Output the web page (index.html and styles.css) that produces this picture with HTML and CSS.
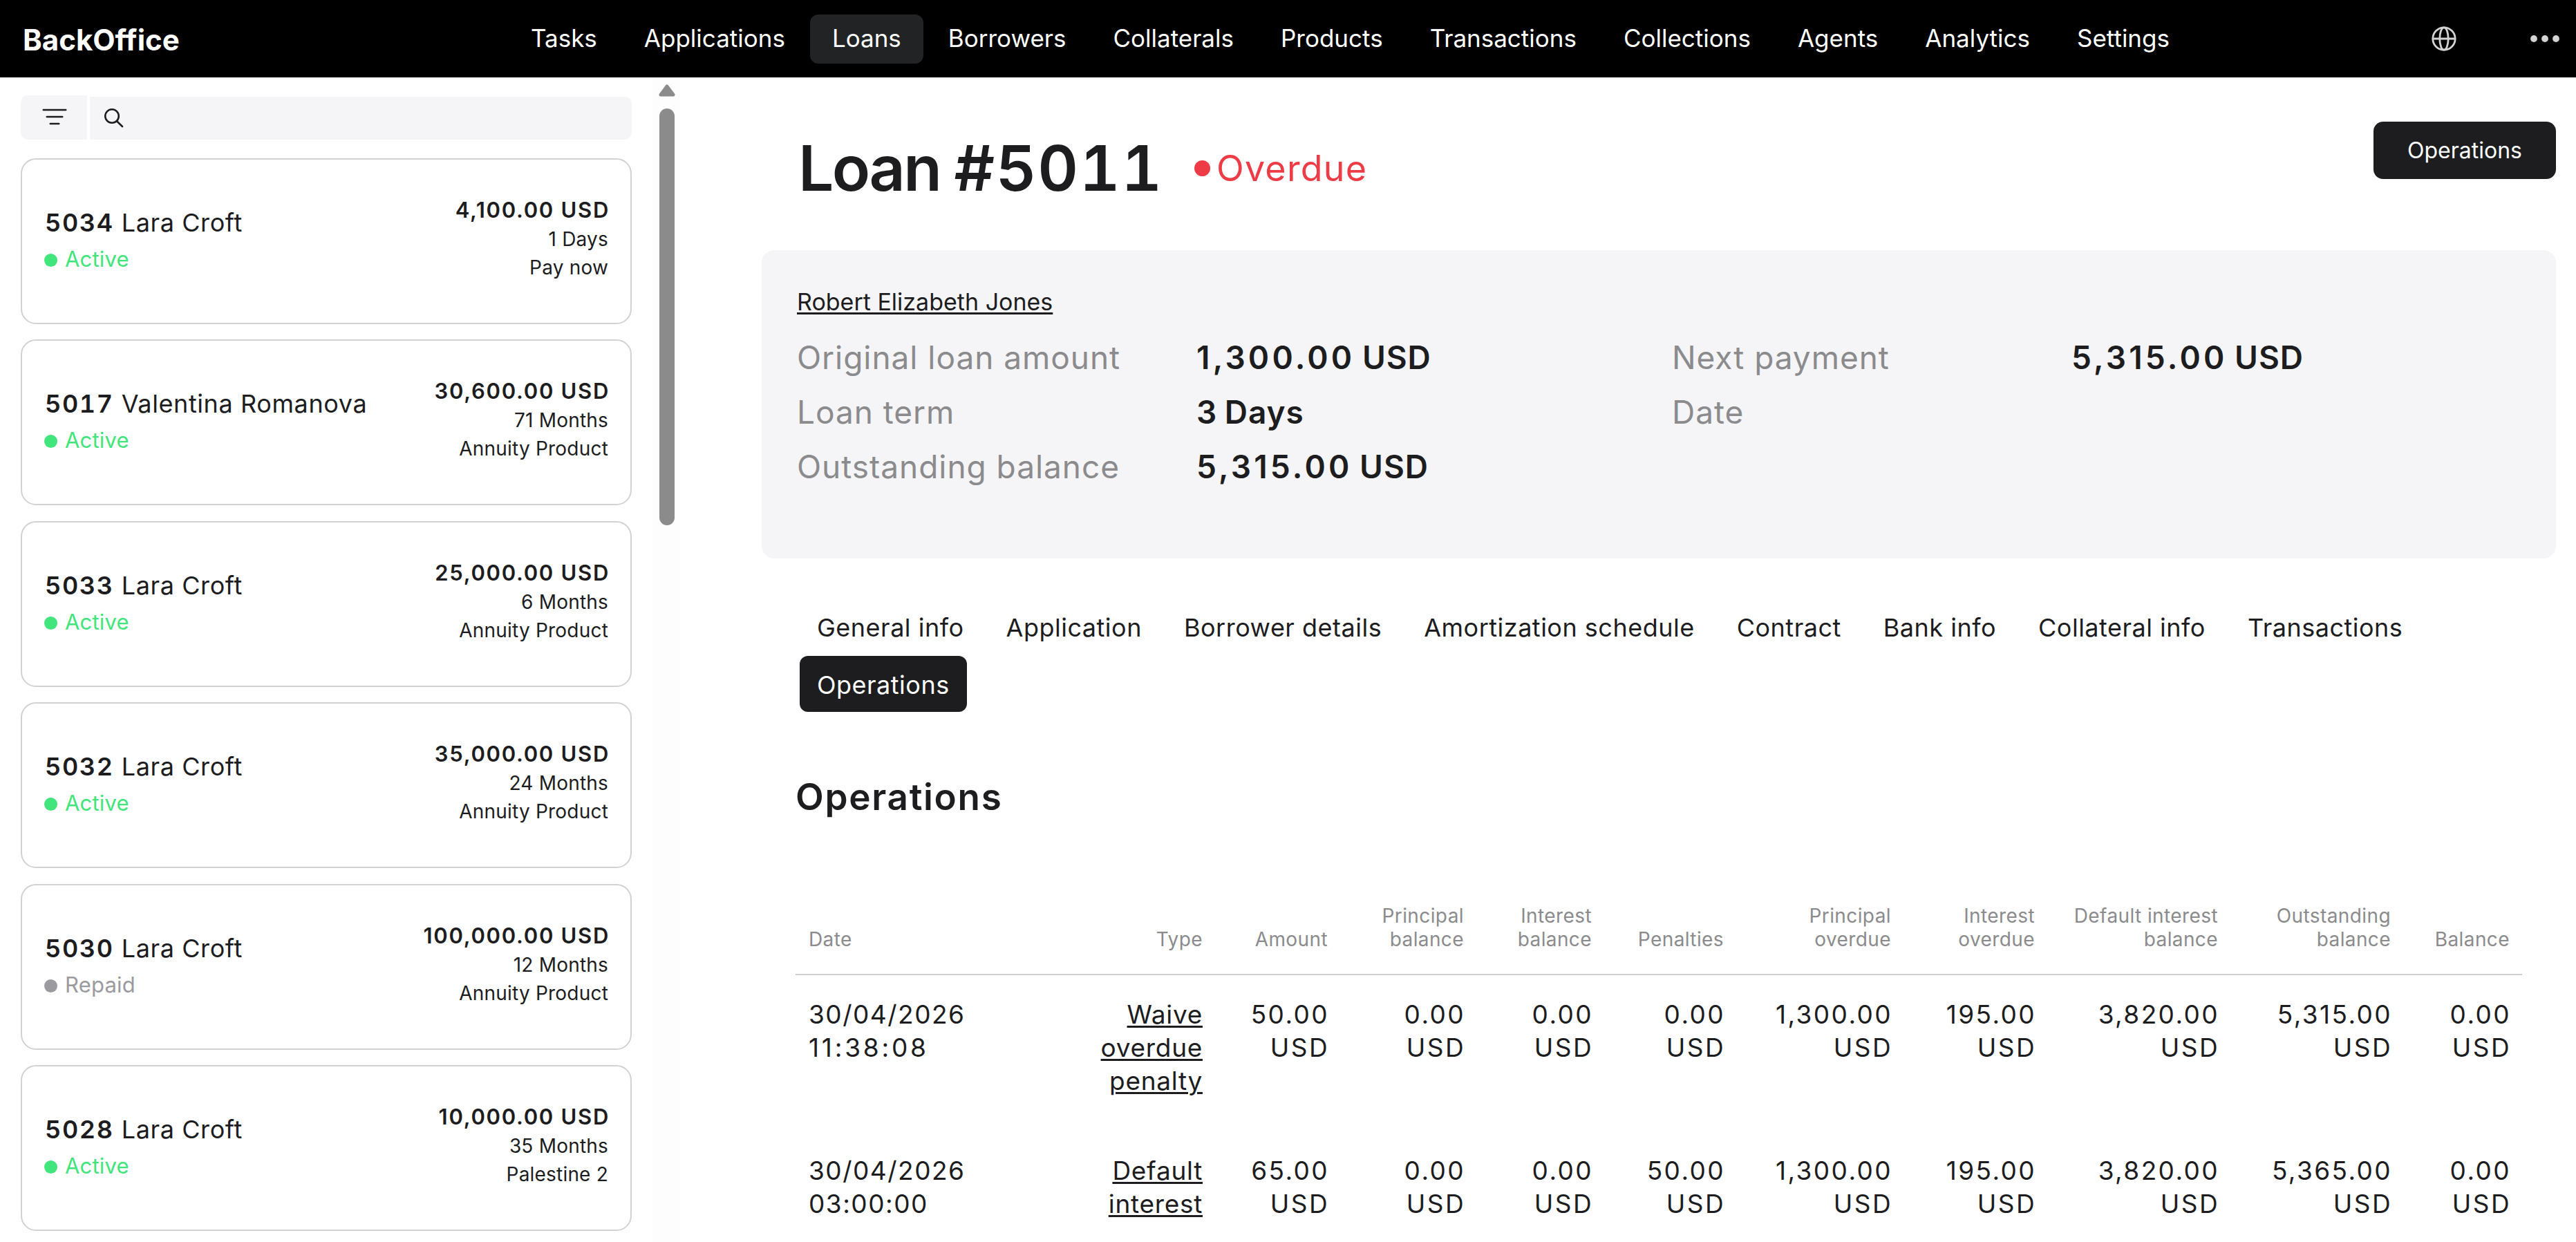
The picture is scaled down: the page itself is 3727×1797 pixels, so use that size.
FILE: index.html
```html
<!DOCTYPE html>
<html lang="en">
<head>
	<title>BackOffice</title>

	<meta charset="UTF-8">

	<link rel="stylesheet" href="styles.css">
</head>

<body>

<header class="header">
	<div class="brand">BackOffice</div>

	<nav class="menu">
		<a class="menu-item">Tasks</a>
		<a class="menu-item">Applications</a>
		<a class="menu-item active">Loans</a>
		<a class="menu-item">Borrowers</a>
		<a class="menu-item">Collaterals</a>
		<a class="menu-item">Products</a>
		<a class="menu-item">Transactions</a>
		<a class="menu-item">Collections</a>
		<a class="menu-item">Agents</a>
		<a class="menu-item">Analytics</a>
		<a class="menu-item">Settings</a>
	</nav>

	<div class="header-icons">
		<svg class="globe" width="36" height="36" viewBox="0 0 36 36">
			<circle cx="18" cy="18" r="16.2"/>
			<ellipse cx="18" cy="18" rx="6.2" ry="16.2"/>
			<path d="M1.8 18H34.2"/>
		</svg>
		<svg class="more" width="42" height="10" viewBox="0 0 42 10">
			<circle cx="5" cy="5" r="4.9"/>
			<circle cx="21" cy="5" r="4.9"/>
			<circle cx="37" cy="5" r="4.9"/>
		</svg>
	</div>
</header>

<div class="page">

	<aside class="sidebar">
		<div class="search">
			<div class="filter-button">
				<svg width="36" height="24" viewBox="0 0 36 24">
					<path d="M1.8 2H34.2M6.8 12H29.2M11.8 22H24.2"/>
				</svg>
			</div>
			<div class="search-field">
				<svg width="28" height="28" viewBox="0 0 28 28">
					<circle cx="11" cy="11" r="9.8"/>
					<path d="M18 18.2L26 26"/>
				</svg>
			</div>
		</div>

		<div class="cards">
			<div class="card">
				<div class="card-left">
					<div class="card-name"><b>5034</b> Lara Croft</div>
					<div class="status green"><i></i>Active</div>
				</div>
				<div class="card-right">
					<div class="card-sum">4,100.00 USD</div>
					<div>1 Days</div>
					<div>Pay now</div>
				</div>
			</div>
			<div class="card">
				<div class="card-left">
					<div class="card-name"><b>5017</b> Valentina Romanova</div>
					<div class="status green"><i></i>Active</div>
				</div>
				<div class="card-right">
					<div class="card-sum">30,600.00 USD</div>
					<div>71 Months</div>
					<div>Annuity Product</div>
				</div>
			</div>
			<div class="card">
				<div class="card-left">
					<div class="card-name"><b>5033</b> Lara Croft</div>
					<div class="status green"><i></i>Active</div>
				</div>
				<div class="card-right">
					<div class="card-sum">25,000.00 USD</div>
					<div>6 Months</div>
					<div>Annuity Product</div>
				</div>
			</div>
			<div class="card">
				<div class="card-left">
					<div class="card-name"><b>5032</b> Lara Croft</div>
					<div class="status green"><i></i>Active</div>
				</div>
				<div class="card-right">
					<div class="card-sum">35,000.00 USD</div>
					<div>24 Months</div>
					<div>Annuity Product</div>
				</div>
			</div>
			<div class="card">
				<div class="card-left">
					<div class="card-name"><b>5030</b> Lara Croft</div>
					<div class="status gray"><i></i>Repaid</div>
				</div>
				<div class="card-right">
					<div class="card-sum">100,000.00 USD</div>
					<div>12 Months</div>
					<div>Annuity Product</div>
				</div>
			</div>
			<div class="card">
				<div class="card-left">
					<div class="card-name"><b>5028</b> Lara Croft</div>
					<div class="status green"><i></i>Active</div>
				</div>
				<div class="card-right">
					<div class="card-sum">10,000.00 USD</div>
					<div>35 Months</div>
					<div>Palestine 2</div>
				</div>
			</div>
		</div>
	</aside>

	<div class="scrollbar">
		<svg width="24" height="18" viewBox="0 0 24 18">
			<path d="M12 3L21 15H3Z"/>
		</svg>
		<div class="thumb"></div>
	</div>

	<main class="content">
		<div class="title-row">
			<h1>Loan <span>#5011</span></h1>
			<div class="loan-status"><i></i>Overdue</div>
			<button class="button">Operations</button>
		</div>

		<section class="summary">
			<a class="client">Robert Elizabeth Jones</a>
			<div class="summary-grid">
				<span>Original loan amount</span>
				<b><em>1,300.00</em> USD</b>
				<span>Next payment</span>
				<b><em>5,315.00</em> USD</b>
				<span>Loan term</span>
				<b>3 Days</b>
				<span>Date</span>
				<b></b>
				<span>Outstanding balance</span>
				<b><em>5,315.00</em> USD</b>
			</div>
		</section>

		<div class="tabs">
			<a class="tab">General info</a>
			<a class="tab">Application</a>
			<a class="tab">Borrower details</a>
			<a class="tab">Amortization schedule</a>
			<a class="tab">Contract</a>
			<a class="tab">Bank info</a>
			<a class="tab">Collateral info</a>
			<a class="tab">Transactions</a>
			<a class="tab active">Operations</a>
		</div>

		<h2>Operations</h2>

		<table class="operations">
			<colgroup>
				<col class="c-date"><col class="c-type"><col class="c-amount">
				<col class="c-principal"><col class="c-interest"><col class="c-penalties">
				<col class="c-principal-over"><col class="c-interest-over"><col class="c-default">
				<col class="c-outstanding"><col class="c-balance">
			</colgroup>
			<thead>
				<tr>
					<th>Date</th>
					<th>Type</th>
					<th>Amount</th>
					<th>Principal<br>balance</th>
					<th>Interest<br>balance</th>
					<th>Penalties</th>
					<th>Principal<br>overdue</th>
					<th>Interest<br>overdue</th>
					<th>Default interest<br>balance</th>
					<th>Outstanding<br>balance</th>
					<th>Balance</th>
				</tr>
			</thead>
			<tbody>
				<tr>
					<td>30/04/2026<br><span class="time">11:38:08</span></td>
					<td><a>Waive<br>overdue<br>penalty</a></td>
					<td>50.00<br>USD</td>
					<td>0.00<br>USD</td>
					<td>0.00<br>USD</td>
					<td>0.00<br>USD</td>
					<td>1,300.00<br>USD</td>
					<td>195.00<br>USD</td>
					<td>3,820.00<br>USD</td>
					<td>5,315.00<br>USD</td>
					<td>0.00<br>USD</td>
				</tr>
				<tr>
					<td>30/04/2026<br><span class="time round">03:00:00</span></td>
					<td><a>Default<br>interest</a></td>
					<td>65.00<br>USD</td>
					<td>0.00<br>USD</td>
					<td>0.00<br>USD</td>
					<td>50.00<br>USD</td>
					<td>1,300.00<br>USD</td>
					<td>195.00<br>USD</td>
					<td>3,820.00<br>USD</td>
					<td>5,365.00<br>USD</td>
					<td>0.00<br>USD</td>
				</tr>
			</tbody>
		</table>
	</main>

</div>

</body>
</html>
```
FILE: styles.css
```css
* {
	box-sizing: border-box;
}

body {
	margin: 0;
	height: 1797px;
	overflow: hidden;
	background: #fff;
	color: #1d1d1f;
	font-family: Inter, "Liberation Sans", sans-serif;
	font-size: 28px;
}

/* header */

.header {
	display: flex;
	align-items: center;
	height: 112px;
	background: #000;
	color: #fff;
}

.brand {
	width: 736px;
	padding: 2px 0 0 33px;
	font-size: 42px;
	font-weight: 700;
}

.menu {
	display: flex;
	justify-content: space-between;
	width: 2435px;
}

.menu-item {
	height: 71px;
	padding: 0 32px;
	border-radius: 12px;
	font-size: 35px;
	line-height: 69px;
}

.menu-item.active {
	background: #222325;
}

.header-icons {
	display: flex;
	flex: 1;
	align-items: center;
	justify-content: space-between;
	padding: 0 24px 0 347px;
}

.globe {
	fill: none;
	stroke: #d2d2d2;
	stroke-width: 2.8;
}

.more {
	fill: #d2d2d2;
}

.page {
	display: flex;
	height: 1685px;
}

/* list of loans */

.sidebar {
	width: 944px;
	padding: 26px 30px 0 30px;
	overflow: hidden;
}

.search {
	display: flex;
	gap: 4px;
	align-items: flex-end;
	width: 884px;
	height: 64px;
}

.filter-button {
	display: flex;
	align-items: center;
	justify-content: center;
	width: 96px;
	height: 64px;
	padding: 0 0 3px 1px;
	border-radius: 10px 0 0 10px;
	background: #f5f5f7;
}

.search-field {
	display: flex;
	align-items: center;
	flex: 1;
	height: 62px;
	padding: 0 0 1px 21px;
	border-radius: 0 10px 10px 0;
	background: #f5f5f7;
}

.search svg {
	fill: none;
	stroke: #1d1d1f;
	stroke-width: 2.6;
	stroke-linecap: round;
}

.cards {
	display: flex;
	flex-direction: column;
	gap: 22.4px;
	width: 884px;
	margin-top: 27px;
}

.card {
	display: flex;
	justify-content: space-between;
	flex: none;
	height: 240px;
	padding: 0 32px 0 33px;
	border: 2px solid #d2d2d2;
	border-radius: 22px;
}

.card-left {
	padding-top: 69px;
}

.card-name {
	font-size: 36px;
	line-height: 44px;
	letter-spacing: 0.6px;
}

.card-name b {
	display: inline-block;
	width: 100px;
	font-weight: 600;
	font-variant-numeric: tabular-nums;
	letter-spacing: 1.6px;
}

.status {
	display: flex;
	align-items: center;
	margin-top: 13px;
	font-size: 31px;
	line-height: 36px;
	letter-spacing: 0.2px;
}

.status i {
	width: 19px;
	height: 19px;
	margin: 3px 11px 0 -1px;
	border-radius: 50%;
	background: currentColor;
}

.green {
	color: #42e57b;
}

.gray {
	color: #9b9b9f;
}

.card-right {
	padding-top: 52px;
	text-align: right;
	line-height: 41px;
	letter-spacing: 0.2px;
}

.card-sum {
	margin: 0 -2px 2px 0;
	font-size: 31px;
	font-weight: 600;
	letter-spacing: 1.7px;
}

/* scrollbar */

.scrollbar {
	display: flex;
	flex-direction: column;
	align-items: center;
	width: 40px;
	padding: 10px 0 0 2px;
	background: #fdfdfd;
}

.scrollbar svg {
	fill: #8b8b8b;
	stroke: #8b8b8b;
	stroke-width: 5;
	stroke-linejoin: round;
}

.thumb {
	width: 22px;
	height: 603px;
	margin-top: 17px;
	border-radius: 11px;
	background: #8b8b8b;
}

/* loan */

.content {
	width: 2714px;
	padding-left: 118px;
}

.title-row {
	display: flex;
	align-items: flex-start;
	height: 250px;
	padding-top: 64px;
	padding-left: 53px;
}

h1 {
	width: 515px;
	margin: 12px 0 0 0;
	font-size: 91px;
	line-height: 110px;
	font-weight: 600;
	letter-spacing: -2.6px;
	white-space: nowrap;
}

h1 span {
	font-variant-numeric: tabular-nums;
	letter-spacing: 1.6px;
}

.loan-status {
	display: flex;
	align-items: center;
	margin: 37px 0 0 58px;
	color: #ed3c46;
	font-size: 52px;
	line-height: 62px;
	letter-spacing: 1.2px;
}

.loan-status i {
	width: 23px;
	height: 23px;
	margin: 0 9px 2px 0;
	border-radius: 50%;
	background: currentColor;
}

.button {
	width: 264px;
	height: 83px;
	margin-left: auto;
	border: none;
	border-radius: 14px;
	background: #1d1d1f;
	color: #fff;
	font-family: inherit;
	font-size: 32px;
}

.summary {
	height: 446px;
	padding: 55px 0 0 51px;
	border-radius: 18px;
	background: #f5f5f7;
}

.client {
	display: block;
	font-size: 34px;
	line-height: 40px;
	text-decoration: underline;
	text-decoration-thickness: 3px;
	text-underline-offset: 3px;
}

.summary-grid {
	display: grid;
	grid-template-columns: 577px 689px 577px 1fr;
	margin-top: 21px;
	font-size: 46px;
	line-height: 79px;
	letter-spacing: 0.95px;
}

.summary-grid span {
	color: #8b8b8e;
}

.summary-grid b {
	padding-left: 1px;
	font-weight: 600;
	word-spacing: -2px;
}

.summary-grid em {
	font-style: normal;
	letter-spacing: 4.2px;
}

.tabs {
	display: flex;
	flex-wrap: wrap;
	gap: 2px 11px;
	margin: 58px 0 0 55px;
}

.tab {
	height: 81px;
	padding: 2px 25px 0 25px;
	border-radius: 12px;
	font-size: 36px;
	line-height: 80px;
	letter-spacing: 0.5px;
}

.tab.active {
	background: #1d1d1f;
	color: #fff;
}

h2 {
	margin: 91px 0 0 49px;
	font-size: 53px;
	line-height: 64px;
	font-weight: 600;
	letter-spacing: 1.7px;
}

/* operations table */

.operations {
	width: 2498px;
	margin: 123px 0 0 49px;
	border-collapse: collapse;
	table-layout: fixed;
}

.c-date { width: 300px; }
.c-type { width: 307px; }
.c-amount { width: 181px; }
.c-principal { width: 197px; }
.c-interest { width: 185px; }
.c-penalties { width: 191px; }
.c-principal-over { width: 242px; }
.c-interest-over { width: 208px; }
.c-default { width: 265px; }
.c-outstanding { width: 250px; }
.c-balance { width: 172px; }

th {
	padding: 0 18px 33px 0;
	border-bottom: 2px solid #d0d0d0;
	color: #8b8b8e;
	font-size: 28px;
	font-weight: 400;
	line-height: 34px;
	letter-spacing: 0.4px;
	text-align: right;
	vertical-align: bottom;
	white-space: nowrap;
}

td {
	height: 227px;
	padding: 33px 16px 0 0;
	font-size: 37px;
	line-height: 48px;
	letter-spacing: 2.4px;
	text-align: right;
	vertical-align: top;
}

th:first-child,
td:first-child {
	padding-left: 19px;
	text-align: left;
}

td:first-child {
	letter-spacing: 1.5px;
}

.time {
	letter-spacing: 3.8px;
}

.time.round {
	letter-spacing: 1.5px;
}

td a {
	letter-spacing: 0.7px;
	text-decoration: underline;
	text-decoration-thickness: 3px;
	text-underline-offset: 3px;
}

td:nth-child(2) {
	padding-right: 18px;
}
```
